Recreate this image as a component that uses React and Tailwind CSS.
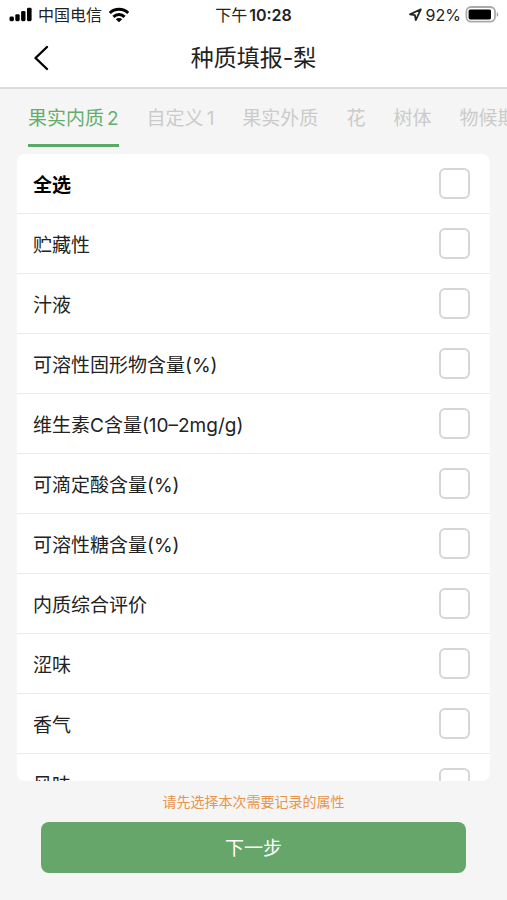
import React, { useState } from 'react'

const tabs = [
  { name: '果实内质', count: 2 },
  { name: '自定义', count: 1 },
  { name: '果实外质' },
  { name: '花' },
  { name: '树体' },
  { name: '物候期' }
]

const attributes = [
  '贮藏性',
  '汁液',
  '可溶性固形物含量(%)',
  '维生素C含量(10–2mg/g)',
  '可滴定酸含量(%)',
  '可溶性糖含量(%)',
  '内质综合评价',
  '涩味',
  '香气',
  '风味'
]

function StatusBar() {
  return (
    <div className="grid h-7 shrink-0 grid-cols-[1fr_auto_1fr] items-center pt-0.5 pr-2 pl-2 text-base leading-6">
      <div className="flex items-center gap-1.5">
        <svg width="24" height="16" viewBox="0 0 24 16" aria-hidden="true">
          <rect x="1.5" y="9.6" width="4.4" height="4.6" rx="1.4" />
          <rect x="7.3" y="7.2" width="4.4" height="7" rx="1.4" />
          <rect x="13.1" y="4" width="4.4" height="10.2" rx="1.4" />
          <rect x="19" y="0.8" width="4.6" height="13.4" rx="1.4" />
        </svg>
        <span>中国电信</span>
        <svg width="22" height="16" viewBox="0 0 22 16" fill="none" stroke="#000" strokeWidth="3" aria-hidden="true">
          <path d="M1.8 6C7 1 15 1 20.2 6" />
          <path d="M5.4 9.8c3.2-3 8-3 11.2 0" />
          <path d="M11 15.2 7.8 12.2c1.7-1.6 4.7-1.6 6.4 0z" fill="#000" stroke="none" />
        </svg>
      </div>
      <div className="flex items-center gap-0.5">
        <span>下午</span>
        <span className="font-semibold">10:28</span>
      </div>
      <div className="flex items-center justify-end gap-1">
        <svg width="14" height="14" viewBox="0 0 14 14" fill="none" stroke="#222" strokeWidth="1.8" strokeLinejoin="round" aria-hidden="true">
          <path d="M12.8 1.3 2 6.4l4.9.8.9 5z" />
        </svg>
        <span>92%</span>
        <svg width="34" height="18" viewBox="0 0 34 18" aria-hidden="true">
          <rect x="1.4" y="1" width="28.6" height="14.6" rx="4.5" fill="#fff" stroke="#aaa" strokeWidth="1.8" />
          <rect x="3.6" y="3.4" width="22.4" height="10" rx="1.6" />
          <path d="M31.8 6.2c1.8.5 1.8 4 0 4.6z" fill="#999" />
        </svg>
      </div>
    </div>
  )
}

function Row({ label, bold, checked, onChange }) {
  return (
    <label className="flex h-15 shrink-0 items-center justify-between border-b border-[#ebebeb] pr-5 pl-4">
      <span className={bold ? 'pt-1 font-bold text-black' : 'pt-1'}>{label}</span>
      <input
        type="checkbox"
        checked={checked}
        onChange={onChange}
        className="size-[31px] appearance-none rounded-md border-2 border-[#d6d6d6] bg-white checked:border-[#66a66a] checked:bg-[#66a66a]"
      />
    </label>
  )
}

export default function App() {
  const [active, setActive] = useState(0)
  const [selected, setSelected] = useState([])
  const all = selected.length === attributes.length

  const toggle = (name) =>
    setSelected((s) =>
      s.includes(name) ? s.filter((n) => n !== name) : [...s, name]
    )

  return (
    <div className="flex h-screen flex-col overflow-hidden bg-[#f5f5f5] font-[Inter,'Noto_Sans_CJK_SC',sans-serif] text-[19px] leading-7 text-[#222]">
      <header className="shrink-0 border-b-2 border-[#dcdcdc] bg-white">
        <StatusBar />
        <div className="grid h-[59px] grid-cols-[1fr_auto_1fr] items-center px-8">
          <button type="button" aria-label="返回" className="w-5">
            <svg width="18" height="26" viewBox="0 0 18 26" fill="none" stroke="#000" strokeWidth="2.4" strokeLinecap="round" strokeLinejoin="round">
              <path d="M15 2 3.5 13 15 24" />
            </svg>
          </button>
          <h1 className="text-[23px]">种质填报-梨</h1>
        </div>
      </header>

      <nav className="flex h-[65px] shrink-0 gap-7 overflow-hidden px-7 whitespace-nowrap">
        {tabs.map((tab, i) => (
          <button
            key={tab.name}
            type="button"
            onClick={() => setActive(i)}
            className={
              i === active
                ? 'flex h-[58px] shrink-0 items-center gap-[3px] border-b-3 border-[#5aa965] pt-1 text-[#66ad6c]'
                : 'flex h-[58px] shrink-0 items-center gap-[3px] border-b-3 border-transparent pt-1 text-[#cbcbcb]'
            }
          >
            <span>{tab.name}</span>
            {tab.count && <span>{tab.count}</span>}
          </button>
        ))}
      </nav>

      <main className="mx-[17px] flex min-h-0 flex-1 flex-col overflow-hidden rounded-lg bg-white">
        <Row
          label="全选"
          bold
          checked={all}
          onChange={() => setSelected(all ? [] : attributes)}
        />
        {attributes.map((name) => (
          <Row
            key={name}
            label={name}
            checked={selected.includes(name)}
            onChange={() => toggle(name)}
          />
        ))}
      </main>

      <footer className="shrink-0 px-[41px] pt-[11px] pb-[27px] text-center">
        <p className="text-sm leading-5 text-[#e8944a]">
          请先选择本次需要记录的属性
        </p>
        <button
          type="button"
          className="mt-2.5 h-[51px] w-full rounded-lg bg-[#66a66a] pt-0.5 text-white"
        >
          下一步
        </button>
      </footer>
    </div>
  )
}
